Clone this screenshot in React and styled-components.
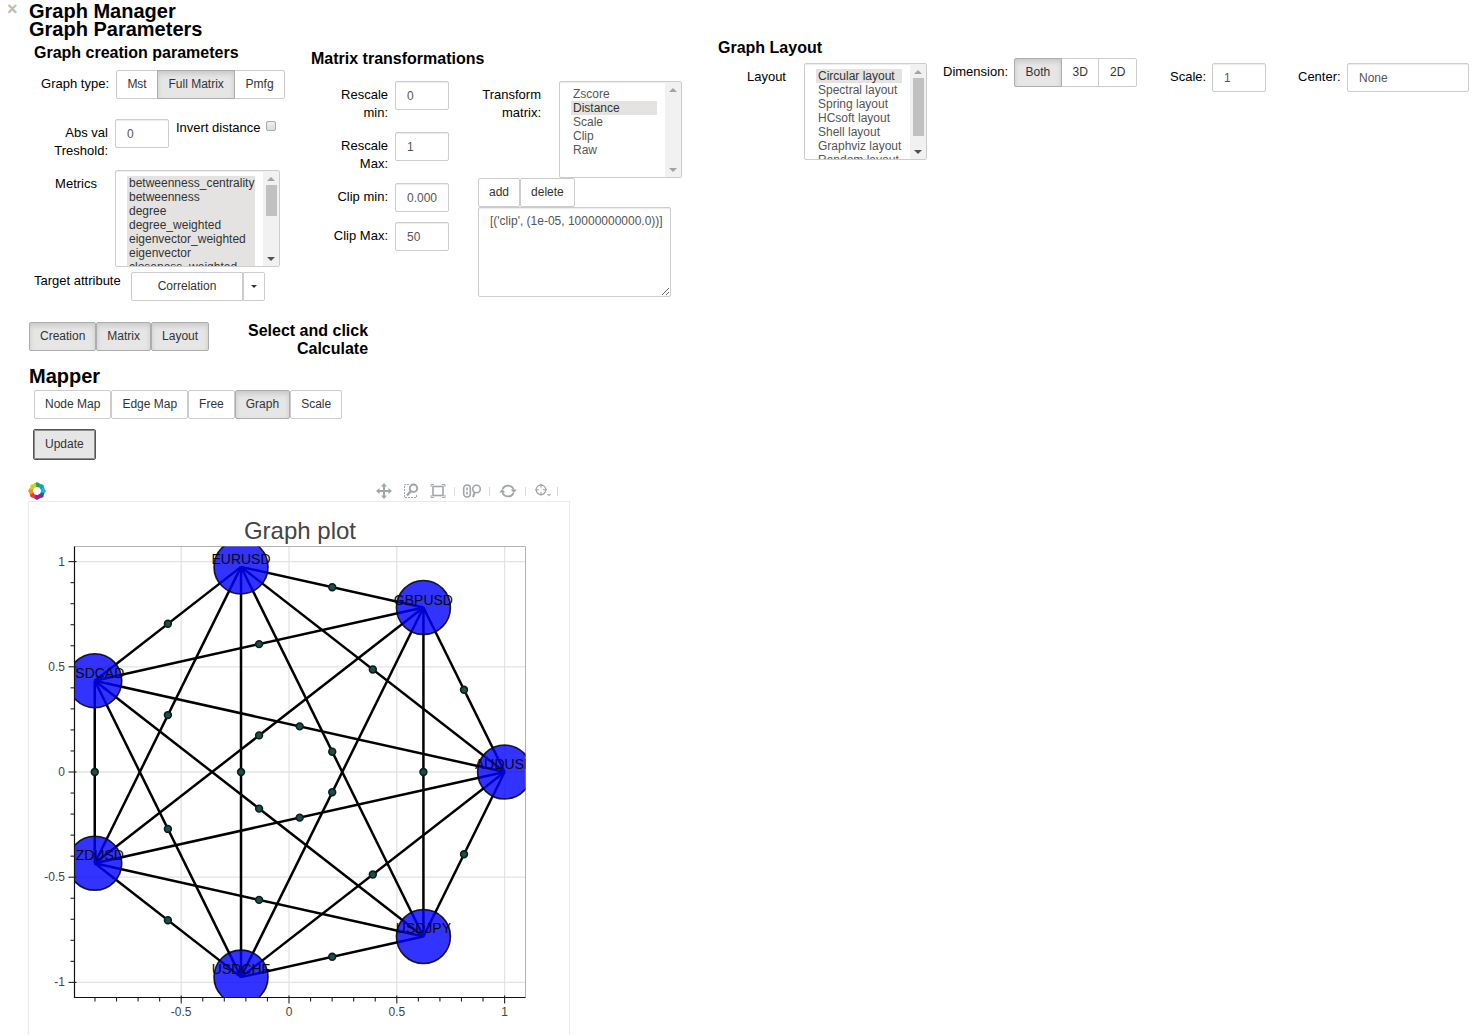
import React from "react";
import styled, { createGlobalStyle, css } from "styled-components";

const GlobalStyle = createGlobalStyle`
  *, *::before, *::after { box-sizing: border-box; }
  body {
    margin: 0;
    background: #fff;
    color: #000;
    font-family: "Liberation Sans", Arial, Helvetica, sans-serif;
    font-size: 13px;
    line-height: 18px;
  }
  button, input, select, textarea { font-family: inherit; }
`;

/* ---------- page ---------- */

const Page = styled.div`
  display: flex;
  align-items: flex-start;
`;

const CloseButton = styled.button`
  flex: 0 0 29px;
  padding: 0 0 0 7px;
  border: 0;
  background: none;
  color: #bbb;
  font-size: 18px;
  font-weight: bold;
  line-height: 18px;
  text-align: left;
`;

const Content = styled.main`
  flex: 1;
  min-width: 0;
  padding-top: 2px;
`;

const Title = styled.h2`
  margin: 0;
  font-size: 20px;
  line-height: 18px;
`;

const Subtitle = styled.h3`
  margin: 0;
  font-size: 16px;
  line-height: 20px;
`;

const Columns = styled.div`
  display: grid;
  grid-template-columns: 282px 407px 1fr;
  align-items: start;
`;

const Column = styled.section`
  padding-top: ${(p) => p.$top || 0}px;
  padding-left: ${(p) => p.$left || 0}px;
`;

/* ---------- form parts ---------- */

const Stack = styled.div`
  display: flex;
  flex-direction: column;
  gap: ${(p) => p.$gap || 0}px;
  padding-top: ${(p) => p.$top || 0}px;
`;

const Row = styled.div`
  display: flex;
  align-items: flex-start;
  gap: ${(p) => p.$gap || 0}px;
  padding-top: ${(p) => p.$top || 0}px;
`;

const labelText = css`
  flex: 0 0 auto;
  width: ${(p) => (p.$width ? `${p.$width}px` : "auto")};
  padding-top: ${(p) => p.$top ?? 5}px;
  text-align: right;
  font-size: 13px;
  line-height: 18px;
  white-space: nowrap;
`;
const Label = styled.label`${labelText}`;
const Caption = styled.span`${labelText}`;

const frame = css`
  border: 1px solid #ccc;
  border-radius: 2px;
  background: #fff;
  box-shadow: inset 0 1px 1px rgba(0, 0, 0, 0.075);
`;

const TextInput = styled.input`
  ${frame}
  flex: ${(p) => (p.$grow ? "1 1 0" : "0 0 54px")};
  min-width: 0;
  width: 54px;
  height: 29px;
  padding: 0 11px;
  color: #555;
  font-size: 12px;
`;

const Script = styled.textarea`
  ${frame}
  display: block;
  width: 193px;
  height: 90px;
  padding: 5px 4px 5px 11px;
  color: #555;
  font-size: 12px;
  line-height: 17px;
  resize: both;
`;

const Check = styled.input`
  appearance: none;
  flex: 0 0 10px;
  width: 10px;
  height: 10px;
  margin: 2px 0 0;
  border: 1px solid #aaa;
  border-radius: 2px;
  background: linear-gradient(#eee, #ddd);
`;

const Button = styled.button`
  height: 29px;
  padding: 0 10px;
  border: 1px solid ${(p) => (p.$active ? "#adadad" : "#ccc")};
  border-radius: 2px;
  background: ${(p) => (p.$active ? "#e6e6e6" : "#fff")};
  box-shadow: ${(p) => (p.$active ? "inset 0 3px 5px rgba(0, 0, 0, 0.125)" : "none")};
  color: #333;
  font-size: 12px;
  line-height: 17px;
  white-space: nowrap;
`;

const UpdateButton = styled(Button)`
  border-color: #8c8c8c;
  background: #e6e6e6;
  outline: 1px solid #555;
  border-radius: 1px;
`;

const ButtonRow = styled.div`
  display: flex;
`;

const Segmented = styled.div`
  display: flex;
  width: ${(p) => p.$width}px;

  ${Button} {
    flex: 1 1 auto;
    border-radius: 0;
    position: relative;
    z-index: 0;
  }
  ${Button} + ${Button} { margin-left: -1px; }
  ${Button}[aria-pressed="true"] { z-index: 1; }
  ${Button}:first-child { border-radius: 2px 0 0 2px; }
  ${Button}:last-child { border-radius: 0 2px 2px 0; }
`;

const MainAction = styled(Button)`
  width: 112px;
  border-radius: 2px 0 0 2px;
`;

const CaretButton = styled(Button)`
  display: flex;
  align-items: center;
  justify-content: center;
  width: 22px;
  padding: 0;
  border-radius: 0 2px 2px 0;
`;

/* ---------- list boxes ---------- */

const ListFrame = styled.div`
  ${frame}
  display: flex;
  width: ${(p) => p.$width}px;
  height: 97px;
  overflow: hidden;
`;

const List = styled.select`
  flex: 1;
  min-width: 0;
  height: 95px;
  padding: 5px 8px 5px 11px;
  border: 0;
  outline: 0;
  background: transparent;
  color: #555;
  font-size: 12px;
  scrollbar-width: none;

  option {
    min-height: 14px;
    height: 14px;
    padding: 0 0 0 2px;
    line-height: 14px;
  }
  option:checked {
    background: #e4e3e2 linear-gradient(#e4e3e2, #e4e3e2);
    -webkit-text-fill-color: #333;
  }
`;

const Track = styled.div`
  flex: 0 0 16px;
  display: flex;
  flex-direction: column;
  align-items: center;
  background: #f1f1f1;
`;

const Thumb = styled.div`
  width: 11px;
  height: ${(p) => p.$height}px;
  margin-bottom: auto;
  background: ${(p) => (p.$height ? "#c1c1c1" : "none")};
`;

const Arrow = ({ down, muted }) => (
  <svg width="16" height="14" viewBox="0 0 16 14">
    <path d={down ? "M4 5h8l-4 4z" : "M4 10h8l-4-4z"} fill={muted ? "#a3a3a3" : "#505050"} />
  </svg>
);

function ListBox({ id, width, thumb, options, selected, multiple }) {
  return (
    <ListFrame $width={width}>
      <List id={id} size={6} multiple={multiple} defaultValue={multiple ? selected : selected[0]}>
        {options.map((o) => <option key={o} value={o}>{o}</option>)}
      </List>
      <Track aria-hidden="true">
        <Arrow muted />
        <Thumb $height={thumb} />
        <Arrow down muted={!thumb} />
      </Track>
    </ListFrame>
  );
}

function Toggle({ active, children }) {
  return <Button type="button" $active={active} aria-pressed={!!active}>{children}</Button>;
}

function NumberField({ id, label, value, tall }) {
  return (
    <FieldRow $tall={tall}>
      <Label htmlFor={id} $width={77}>{label}</Label>
      <TextInput id={id} defaultValue={value} />
    </FieldRow>
  );
}

const FieldRow = styled(Row)`
  gap: 7px;
  min-height: ${(p) => (p.$tall ? 41 : 29)}px;
`;

/* ---------- sections ---------- */

const METRICS = [
  "betweenness_centrality", "betweenness", "degree",
  "degree_weighted", "eigenvector_weighted", "eigenvector", "closeness_weighted",
];
const LAYOUTS = [
  "Circular layout", "Spectral layout", "Spring layout",
  "HCsoft layout", "Shell layout", "Graphviz layout", "Random layout",
];

function CreationParameters() {
  return (
    <Column $top={5} $left={5}>
      <Subtitle>Graph creation parameters</Subtitle>
      <Row $top={7} $gap={7}>
        <Caption $width={75}>Graph type:</Caption>
        <Segmented $width={169} role="group" aria-label="Graph type">
          <Toggle>Mst</Toggle>
          <Toggle active>Full Matrix</Toggle>
          <Toggle>Pmfg</Toggle>
        </Segmented>
      </Row>
      <Row $top={20} $gap={7}>
        <Label htmlFor="threshold" $width={74}>Abs val<br />Treshold:</Label>
        <TextInput id="threshold" defaultValue="0" />
        <Row $gap={5}>
          <Label htmlFor="invert" $top={0}>Invert distance</Label>
          <Check id="invert" type="checkbox" />
        </Row>
      </Row>
      <Row $top={10} $gap={18}>
        <Label htmlFor="metrics" $width={63}>Metrics</Label>
        <ListBox id="metrics" width={165} thumb={31} multiple options={METRICS} selected={METRICS} />
      </Row>
      <Row $top={5} $gap={12}>
        <Caption $width={85} $top={0}>Target attribute</Caption>
        <ButtonRow>
          <MainAction type="button">Correlation</MainAction>
          <CaretButton type="button" aria-label="Choose attribute">
            <svg width="6" height="3" viewBox="0 0 6 3"><path d="M0 0h6L3 3z" fill="#333" /></svg>
          </CaretButton>
        </ButtonRow>
      </Row>
    </Column>
  );
}

function MatrixTransformations() {
  return (
    <Column $top={11}>
      <Subtitle>Matrix transformations</Subtitle>
      <Row $top={12} $gap={29}>
        <Stack $gap={10}>
          <NumberField tall id="rmin" label={<>Rescale<br />min:</>} value="0" />
          <NumberField tall id="rmax" label={<>Rescale<br />Max:</>} value="1" />
          <NumberField id="cmin" label="Clip min:" value="0.00001" />
          <NumberField id="cmax" label="Clip Max:" value="50" />
        </Stack>
        <Stack>
          <Row $gap={18}>
            <Label htmlFor="transform" $width={63}>Transform<br />matrix:</Label>
            <ListBox
              id="transform"
              width={123}
              thumb={0}
              options={["Zscore", "Distance", "Scale", "Clip", "Raw"]}
              selected={["Distance"]}
            />
          </Row>
          <ButtonRow>
            <Button type="button">add</Button>
            <Button type="button">delete</Button>
          </ButtonRow>
          <Script aria-label="Transformations" defaultValue="[('clip', (1e-05, 10000000000.0))]" />
        </Stack>
      </Row>
    </Column>
  );
}

const LayoutGrid = styled.div`
  display: grid;
  grid-template-columns: 225px 227px 128px 1fr;
  align-items: start;
  padding-right: 12px;
`;

function GraphLayout() {
  return (
    <Column>
      <Subtitle>Graph Layout</Subtitle>
      <LayoutGrid>
        <Row $top={5} $gap={18}>
          <Label htmlFor="layout" $width={68}>Layout</Label>
          <ListBox id="layout" width={123} thumb={58} options={LAYOUTS} selected={["Circular layout"]} />
        </Row>
        <Row $gap={7}>
          <Caption $width={64}>Dimension:</Caption>
          <Segmented $width={123} role="group" aria-label="Dimension">
            <Toggle active>Both</Toggle>
            <Toggle>3D</Toggle>
            <Toggle>2D</Toggle>
          </Segmented>
        </Row>
        <Row $top={5} $gap={7}>
          <Label htmlFor="scale" $width={35}>Scale:</Label>
          <TextInput id="scale" defaultValue="1" />
        </Row>
        <Row $top={5} $gap={7}>
          <Label htmlFor="center" $width={42}>Center:</Label>
          <TextInput id="center" $grow defaultValue="None" />
        </Row>
      </LayoutGrid>
    </Column>
  );
}

/* ---------- plot ---------- */

const Figure = styled.figure`
  display: flex;
  flex-direction: column;
  width: 542px;
  margin: 0 0 0 -1px;
  padding-top: 22px;
`;

const Toolbar = styled.div`
  display: flex;
  align-items: center;
  justify-content: space-between;
  height: 20px;
`;

const LogoLink = styled.a`
  display: flex;
`;

const Tools = styled.div`
  display: flex;
  align-items: center;
  padding-right: 12px;
`;

const Tool = styled.button`
  display: flex;
  align-items: center;
  justify-content: center;
  width: ${(p) => p.$width || 27}px;
  height: 20px;
  padding: 0;
  border: 0;
  background: none;
`;

const Divider = styled.span`
  width: 1px;
  height: 9px;
  background: ${(p) => p.$color};
`;

const Canvas = styled.div`
  border: 1px solid #ebebeb;
  border-bottom: 0;

  svg { display: block; }
`;

const PETALS = ["#18a45c", "#12a4a8", "#1fb4e6", "#5a3fa0", "#b0188a", "#ee3a3a", "#f7931e", "#c8d420"];

function BokehLogo() {
  return (
    <svg width="18" height="18" viewBox="-9 -9 18 18">
      {PETALS.map((c, i) => (
        <path key={c} d="M-3.6-6.4L0-9L4.6-6.2L2.4-3.4L-2.2-4.4z" fill={c} transform={`rotate(${i * 45})`} />
      ))}
    </svg>
  );
}

const ICON = { fill: "none", stroke: "#a1a6a9", strokeWidth: 1.6 };

function PlotTools() {
  return (
    <Tools>
      <Tool type="button" aria-label="Pan">
        <svg width="16" height="16" viewBox="0 0 16 16">
          <path d="M8 2v12M2 8h12" {...ICON} strokeWidth="2" />
          <path d="M8 0l3 3.6H5zM8 16l3-3.6H5zM0 8l3.6-3v6zM16 8l-3.6-3v6z" fill="#a1a6a9" />
        </svg>
      </Tool>
      <Tool type="button" aria-label="Box zoom">
        <svg width="16" height="16" viewBox="0 0 16 16">
          <path d="M6 1.5H1.5v13h12V11" {...ICON} strokeWidth="1" strokeDasharray="2 1" />
          <circle cx="10.5" cy="5.2" r="3.7" {...ICON} strokeWidth="2" />
          <path d="M8 8l-4 4.5" {...ICON} strokeWidth="2.4" />
        </svg>
      </Tool>
      <Tool type="button" aria-label="Resize">
        <svg width="16" height="16" viewBox="0 0 16 16">
          <rect x="3" y="3.5" width="10" height="9" {...ICON} />
          <path d="M1 4V1.5h3M12 1.5h3V4M15 12v2.5h-3M4 14.5H1V12" {...ICON} strokeWidth="1" />
        </svg>
      </Tool>
      <Tool as="span" $width={6}><Divider $color="#e0ddd5" /></Tool>
      <Tool type="button" aria-label="Wheel zoom" $width={30}>
        <svg width="20" height="16" viewBox="0 0 20 16">
          <rect x="1.7" y="2" width="6.6" height="12" rx="3.3" {...ICON} />
          <path d="M5 4.5v2.8M5 8.7v2.8" {...ICON} />
          <circle cx="14.5" cy="6" r="3.8" {...ICON} />
          <path d="M12.8 9L11 14.2" {...ICON} strokeWidth="2" />
        </svg>
      </Tool>
      <Tool as="span" $width={5}><Divider $color="#d5d7de" /></Tool>
      <Tool type="button" aria-label="Reset" $width={31}>
        <svg width="18" height="16" viewBox="0 0 18 16">
          <path d="M3.5 6A6 6 0 0 1 14.6 6.8M14.5 10A6 6 0 0 1 3.4 9.2" {...ICON} strokeWidth="1.8" />
          <path d="M11.7 6.5H17.8L14.8 10zM0.2 9.5H6.3L3.2 6z" fill="#a1a6a9" />
        </svg>
      </Tool>
      <Tool as="span" $width={5}><Divider $color="#d3e0ec" /></Tool>
      <Tool type="button" aria-label="Inspect" $width={29}>
        <svg width="18" height="16" viewBox="0 0 18 16">
          <circle cx="7" cy="6.8" r="4.8" {...ICON} strokeWidth="1.3" />
          <path d="M7 .8v4M7 8.8v4M1 6.8h4M9 6.8h4" {...ICON} strokeWidth="1.1" />
          <path d="M12.5 11h5l-2.5 2.6z" fill="#b6babc" />
        </svg>
      </Tool>
      <Divider $color="#cfd6de" />
    </Tools>
  );
}

const NAMES = ["AUDUSD", "GBPUSD", "EURUSD", "USDCAD", "NZDUSD", "USDCHF", "USDJPY"];
const toX = (v) => 260 + v * 215.6;
const toY = (v) => 270 - v * 210.4;
const NODES = NAMES.map((name, i) => {
  const angle = (2 * Math.PI * i) / NAMES.length;
  return { name, x: toX(Math.cos(angle)), y: toY(Math.sin(angle)) };
});
const EDGES = NODES.flatMap((a, i) => NODES.slice(i + 1).map((b) => [a, b]));
const LEFT = 45.5, RIGHT = 496.5, TOP = 44.5, BOTTOM = 495.5;
const tenths = (from, to) => Array.from({ length: to - from + 1 }, (_, i) => from + i);

const PlotText = styled.text`
  font-family: "Liberation Sans", Arial, sans-serif;
  font-size: ${(p) => p.$size}px;
  fill: ${(p) => p.$color || "#444"};
`;

function GraphPlot() {
  return (
    <svg width="540" height="533" viewBox="0 0 540 533" role="img" aria-label="Graph plot">
      <clipPath id="frame"><rect x={LEFT} y={TOP} width={RIGHT - LEFT} height={BOTTOM - TOP} /></clipPath>
      <PlotText $size={24} x="271" y="37" textAnchor="middle">Graph plot</PlotText>
      <g stroke="#e3e3e3" strokeWidth="1.3">
        {[-0.5, 0, 0.5, 1].map((v) => <line key={v} x1={toX(v)} x2={toX(v)} y1={TOP} y2={BOTTOM} />)}
        {[-1, -0.5, 0, 0.5, 1].map((v) => <line key={v} x1={LEFT} x2={RIGHT} y1={toY(v)} y2={toY(v)} />)}
      </g>
      <path d={`M${LEFT} ${TOP}H${RIGHT}V${BOTTOM}`} fill="none" stroke="#b3b3b3" />
      <g clipPath="url(#frame)">
        <g stroke="#000" strokeWidth="2.5">
          {EDGES.map(([a, b]) => <line key={a.name + b.name} x1={a.x} y1={a.y} x2={b.x} y2={b.y} />)}
        </g>
        <g fill="#1b4f47" stroke="#0b1e1b" strokeWidth="1.6">
          {EDGES.map(([a, b]) => <circle key={a.name + b.name} cx={(a.x + b.x) / 2} cy={(a.y + b.y) / 2} r="3.4" />)}
        </g>
        <g fill="#00f" fillOpacity="0.8" stroke="#000" strokeOpacity="0.85" strokeWidth="1.6">
          {NODES.map((n) => <circle key={n.name} cx={n.x} cy={n.y} r="27" />)}
        </g>
        {NODES.map((n) => (
          <PlotText key={n.name} $size={14} $color="#08080f" x={n.x} y={n.y - 3} textAnchor="middle">{n.name}</PlotText>
        ))}
      </g>
      <path d={`M${LEFT} ${TOP}V${BOTTOM}H${RIGHT}`} fill="none" stroke="#111" strokeWidth="1.2" />
      <g stroke="#222" strokeWidth="1.1">
        {tenths(-9, 10).map((n) => (
          <line key={n} x1={toX(n / 10)} x2={toX(n / 10)} y1={n % 5 ? BOTTOM : BOTTOM - 2} y2={n % 5 ? BOTTOM + 4 : BOTTOM + 6} />
        ))}
        {tenths(-10, 10).map((n) => (
          <line key={n} y1={toY(n / 10)} y2={toY(n / 10)} x1={n % 5 ? LEFT - 4 : LEFT - 6} x2={n % 5 ? LEFT : LEFT + 2} />
        ))}
      </g>
      {[-0.5, 0, 0.5, 1].map((v) => (
        <PlotText key={v} $size={12} x={toX(v)} y="514" textAnchor="middle">{v}</PlotText>
      ))}
      {[-1, -0.5, 0, 0.5, 1].map((v) => (
        <PlotText key={v} $size={12} x="36" y={toY(v) + 4} textAnchor="end">{v}</PlotText>
      ))}
    </svg>
  );
}

/* ---------- app ---------- */

const Actions = styled.div`
  display: flex;
  align-items: flex-start;
  padding-top: 21px;
`;

const Hint = styled(Subtitle)`
  width: 159px;
  padding-left: 30px;
  line-height: 18px;
  text-align: right;
`;

const Mapper = styled.section`
  padding-top: 9px;
`;

const MapperButtons = styled(Stack)`
  align-items: flex-start;
  padding: 5px 0 0 5px;
`;

export default function App() {
  return (
    <>
      <GlobalStyle />
      <Page>
        <CloseButton type="button" aria-label="Close">×</CloseButton>
        <Content>
          <Title as="h1">Graph Manager</Title>
          <Title>Graph Parameters</Title>
          <Columns>
            <CreationParameters />
            <MatrixTransformations />
            <GraphLayout />
          </Columns>
          <Actions>
            <ButtonRow>
              <Toggle active>Creation</Toggle>
              <Toggle active>Matrix</Toggle>
              <Toggle active>Layout</Toggle>
            </ButtonRow>
            <Hint>Select and click Calculate</Hint>
          </Actions>
          <Mapper>
            <Title>Mapper</Title>
            <MapperButtons $gap={11}>
              <ButtonRow>
                <Toggle>Node Map</Toggle>
                <Toggle>Edge Map</Toggle>
                <Toggle>Free</Toggle>
                <Toggle active>Graph</Toggle>
                <Toggle>Scale</Toggle>
              </ButtonRow>
              <UpdateButton type="button">Update</UpdateButton>
            </MapperButtons>
          </Mapper>
          <Figure>
            <Toolbar>
              <LogoLink href="#" aria-label="Bokeh"><BokehLogo /></LogoLink>
              <PlotTools />
            </Toolbar>
            <Canvas><GraphPlot /></Canvas>
          </Figure>
        </Content>
      </Page>
    </>
  );
}
